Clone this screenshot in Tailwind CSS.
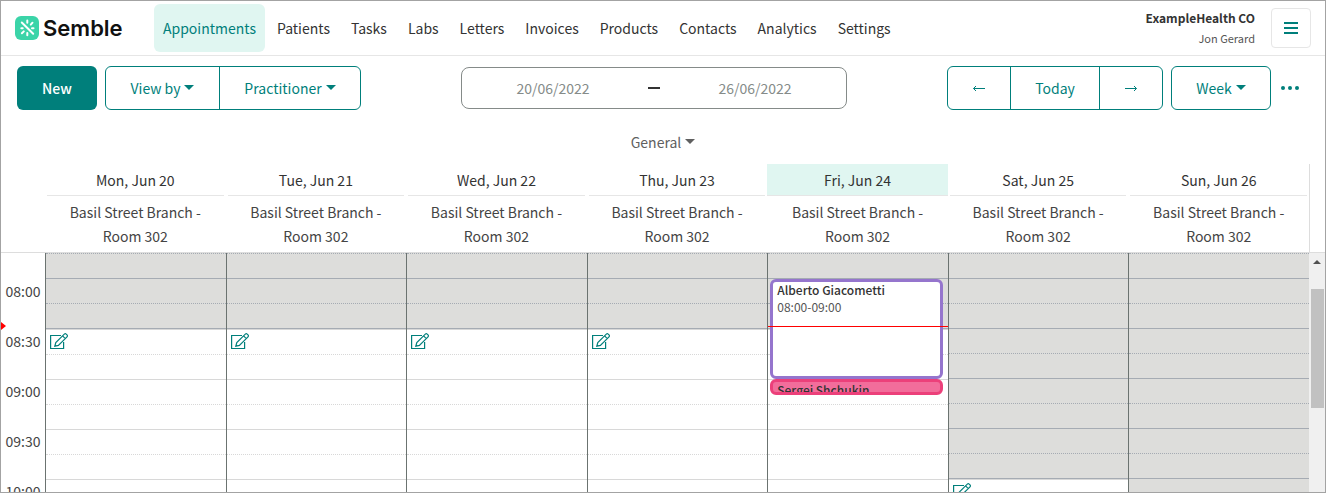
<!DOCTYPE html>
<html lang="en">
  <head>
    <meta charset="UTF-8" />
    <meta name="viewport" content="width=device-width, initial-scale=1.0" />
    <title>Appointments</title>
    <script src="https://cdn.jsdelivr.net/npm/@tailwindcss/browser@4"></script>
  </head>
  <body>
    <div class="flex flex-col h-screen overflow-hidden border border-[#a3a3a3] bg-white font-['Noto_Sans_CJK_SC','Noto_Sans',sans-serif] text-sm text-[#333]">
      <!-- Header -->
      <header class="flex shrink-0 items-center h-[55px] border-b border-[#e6e6e6] pl-[14px] pr-[14px]">
        <a href="#" class="flex items-center gap-1 w-[139px]" aria-label="Semble">
          <svg class="w-6 h-6" viewBox="0 0 24 24" fill="none" stroke="#fff" stroke-width="2" stroke-linecap="round">
            <rect width="24" height="24" rx="6" fill="#3bd4a8" stroke="none" />
            <path d="M6.800 6.500L18.200 17.700M12.300 4.500v2.300M12.300 17v2.300M17.500 6.700l-1.700 1.900M8.800 15.400l-1.900 1.900M6.300 12.300h1.400M17 12.300h1.500" />
          </svg>
          <span class="font-['Inter',sans-serif] text-[22px] leading-6 font-semibold text-[#111]">Semble</span>
        </a>
        <nav class="flex items-center gap-[3px]">
          <a href="#" class="flex items-center h-12 px-[9px] rounded-md bg-[#e0f6f1] text-[#007f7b]">Appointments</a>
          <a href="#" class="flex items-center h-12 px-[9px]">Patients</a>
          <a href="#" class="flex items-center h-12 px-[9px]">Tasks</a>
          <a href="#" class="flex items-center h-12 px-[9px]">Labs</a>
          <a href="#" class="flex items-center h-12 px-[9px]">Letters</a>
          <a href="#" class="flex items-center h-12 px-[9px]">Invoices</a>
          <a href="#" class="flex items-center h-12 px-[9px]">Products</a>
          <a href="#" class="flex items-center h-12 px-[9px]">Contacts</a>
          <a href="#" class="flex items-center h-12 px-[9px]">Analytics</a>
          <a href="#" class="flex items-center h-12 px-[9px]">Settings</a>
        </nav>
        <div class="ml-auto mr-4 text-right">
          <div class="text-xs leading-5 font-bold">ExampleHealth CO</div>
          <div class="text-[11px] leading-5 text-[#555]">Jon Gerard</div>
        </div>
        <button class="flex items-center justify-center w-10 h-10 rounded border border-[#e6e6e6]" aria-label="Menu">
          <svg class="w-[14px] h-[14px]" viewBox="0 0 14 14" fill="#007f7b"><path d="M0 1h14v2H0zM0 6h14v2H0zM0 11h14v2H0z" /></svg>
        </button>
      </header>

      <!-- Toolbar -->
      <div class="flex shrink-0 items-center justify-between pl-4 pr-6 pt-[10px] text-[#007f7b]">
        <div class="flex gap-2">
          <button class="w-20 h-11 rounded-md bg-[#007f7b] font-medium text-white">New</button>
          <div class="flex h-11 rounded-md border border-[#007f7b]">
            <button class="flex items-center justify-center gap-1 w-[114px] border-r border-[#007f7b]">
              View by
              <svg class="w-[10px] h-[10px]" viewBox="0 0 10 10" fill="currentColor"><path d="M0 2h10L5 7z" /></svg>
            </button>
            <button class="flex items-center justify-center gap-1 w-[140px]">
              Practitioner
              <svg class="w-[10px] h-[10px]" viewBox="0 0 10 10" fill="currentColor"><path d="M0 2h10L5 7z" /></svg>
            </button>
          </div>
        </div>
        <div class="flex items-center w-[386px] h-[42px] rounded-lg border border-[#858b89] text-[#858b89]">
          <input type="text" value="20/06/2022" aria-label="Start date" class="flex-1 min-w-0 text-center" />
          <svg class="w-3 h-3 mx-1" viewBox="0 0 12 12" fill="#333"><path d="M0 5h12v2H0z" /></svg>
          <input type="text" value="26/06/2022" aria-label="End date" class="flex-1 min-w-0 text-center" />
        </div>
        <div class="flex gap-2">
          <div class="flex h-11 rounded-md border border-[#007f7b]">
            <button class="flex items-center justify-center w-[63px] border-r border-[#007f7b]" aria-label="Previous">
              <svg class="w-3 h-3" viewBox="0 0 12 12" fill="none" stroke="currentColor"><path d="M.5 6.500H12M3 4L.5 6.500 3 9" /></svg>
            </button>
            <button class="w-[89px] border-r border-[#007f7b]">Today</button>
            <button class="flex items-center justify-center w-[62px]" aria-label="Next">
              <svg class="w-3 h-3" viewBox="0 0 12 12" fill="none" stroke="currentColor"><path d="M0 6.500H11.500M9 4l2.500 2.500L9 9" /></svg>
            </button>
          </div>
          <button class="flex items-center justify-center gap-1 w-[100px] h-11 rounded-md border border-[#007f7b]">
            Week
            <svg class="w-[10px] h-[10px]" viewBox="0 0 10 10" fill="currentColor"><path d="M0 2h10L5 7z" /></svg>
          </button>
          <button class="flex items-center justify-center w-[22px] h-11" aria-label="More">
            <svg class="w-[18px] h-1" viewBox="0 0 18 4" fill="currentColor"><circle cx="2" cy="2" r="2" /><circle cx="9" cy="2" r="2" /><circle cx="16" cy="2" r="2" /></svg>
          </button>
        </div>
      </div>

      <button class="flex shrink-0 items-center justify-center gap-1 h-[54px] pt-[10px] text-[#606060]">
        General
        <svg class="w-[10px] h-[10px]" viewBox="0 0 10 10" fill="currentColor"><path d="M0 2h10L5 7z" /></svg>
      </button>

      <!-- Day headings -->
      <div class="flex shrink-0 border-b border-[#ddd] pl-11 pr-[15px]">
        <div id="days" class="grid grid-cols-7 flex-1 border-r border-[#ddd] text-center leading-6"></div>
      </div>

      <!-- Calendar -->
      <div class="relative flex flex-1 min-h-0 overflow-hidden">
        <div id="times" class="w-11 shrink-0 pt-[26px] text-center leading-[25px]"></div>
        <div id="grid" class="grid grid-cols-7 flex-1"></div>
        <div class="flex flex-col items-center w-4 shrink-0 bg-[#f0f0f0]">
          <svg class="w-2 h-9 shrink-0" viewBox="0 0 8 36" fill="#505050"><path d="M0 11l4-4 4 4z" /></svg>
          <div class="w-[13px] h-[119px] bg-[#c1c1c1]"></div>
        </div>
        <svg class="absolute left-0 top-[69px] w-[5px] h-2" viewBox="0 0 5 8" fill="#f00"><path d="M0 0l5 4-5 4z" /></svg>
      </div>
    </div>

    <script>
      // closed = number of leading 15 minute slots outside working hours
      const days = [
        { name: "Mon, Jun 20", closed: 3, edit: true },
        { name: "Tue, Jun 21", closed: 3, edit: true },
        { name: "Wed, Jun 22", closed: 3, edit: true },
        { name: "Thu, Jun 23", closed: 3, edit: true },
        { name: "Fri, Jun 24", closed: 3, today: true },
        { name: "Sat, Jun 25", closed: 9, edit: true },
        { name: "Sun, Jun 26", closed: 10 },
      ];
      const times = ["08:00", "08:30", "09:00", "09:30", "10:00"];
      const slots = 10;

      const editButton = `
        <button class="block pl-1 pt-[3px] text-[#007f7b]" aria-label="Edit availability">
          <svg class="w-[18px] h-[17px]" viewBox="0 0 18 17" fill="none" stroke="currentColor" stroke-width="1.2">
            <path d="M11 2.500H.6v13h13V9" />
            <path d="M4.800 13.200l1-3.600L14.300 1.100q1-.8 1.900 0l.8.800q.9 1 0 1.900L8.400 12.400zM12.600 2.900l2.700 2.700" />
          </svg>
        </button>`;

      const appointments = `
        <div class="absolute left-0.5 right-[5px] top-[26px] h-[100px] rounded-md border-3 border-[#9575cd] bg-white px-1 text-xs">
          <div class="leading-[15px] font-medium">Alberto Giacometti</div>
          <div class="leading-[19px] text-[#555]">08:00-09:00</div>
        </div>
        <div class="absolute left-0.5 right-[5px] top-[126px] h-4 overflow-hidden rounded-md border-3 border-[#ec407a] bg-[#f26d9b] px-1 text-xs leading-[15px] font-medium">Sergei Shchukin</div>
        <div class="absolute inset-x-0 top-[73px] h-px bg-[#f00]"></div>`;

      document.getElementById("days").innerHTML = days
        .map(
          (d) => `
          <div>
            <div class="${d.today ? "bg-[#e0f6f1]" : "mx-0.5"} h-8 border-b border-[#e6e6e6] leading-8">${d.name}</div>
            <div class="h-14 px-4 pt-1 text-[#444]">Basil Street Branch - Room 302</div>
          </div>`
        )
        .join("");

      document.getElementById("times").innerHTML = times
        .map((t) => `<div class="h-[50px] text-[#444]">${t}</div>`)
        .join("");

      document.getElementById("grid").innerHTML = days
        .map((d) => {
          let html = "";
          for (let i = 0; i < slots; i++) {
            const line = i % 2 ? "border-solid" : "border-dotted";
            if (i < d.closed) {
              const last = i === d.closed - 1 ? "h-[26px] border-b [border-bottom-style:solid]" : "h-[25px]";
              html += `<div class="${last} border-t ${line} border-[#a5abb3] bg-[#dddddb]"></div>`;
            } else {
              html += `<div class="h-[25px] border-t ${line} border-[#d8d8d8]">${d.edit && i === d.closed ? editButton : ""}</div>`;
            }
          }
          return `<div class="relative border-l border-[#6b7370]">${html}${d.today ? appointments : ""}</div>`;
        })
        .join("");
    </script>
  </body>
</html>
